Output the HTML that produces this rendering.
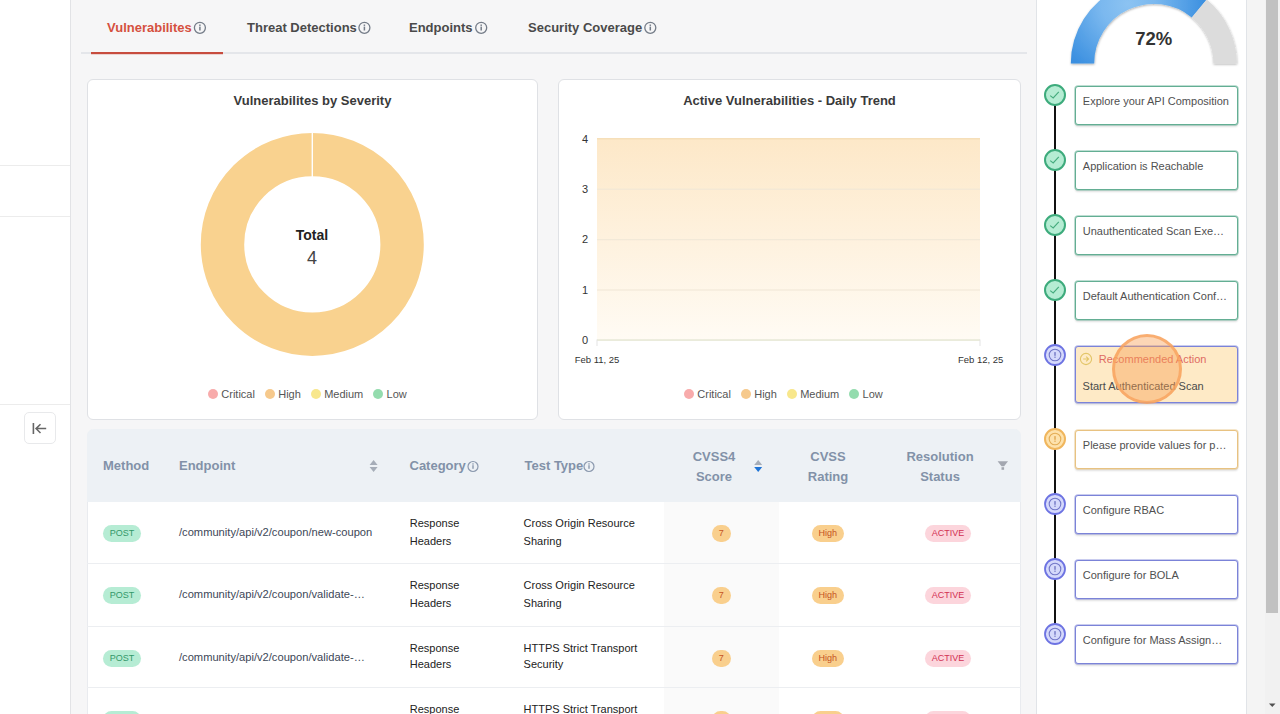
<!DOCTYPE html>
<html><head><meta charset="utf-8">
<style>
*{box-sizing:border-box;margin:0;padding:0}
html,body{width:1280px;height:714px;overflow:hidden;background:#f6f6f7;font-family:"Liberation Sans",sans-serif;}
.abs{position:absolute}
#sidebar{position:absolute;left:0;top:0;width:71px;height:714px;background:#fff;border-right:1px solid #e2e3e6}
.hl{position:absolute;left:0;width:70px;height:1px;background:#ececec}
#collapse{position:absolute;left:24px;top:412px;width:32px;height:32px;border:1px solid #e8e9eb;border-radius:5px;background:#fff}
.tab{position:absolute;top:19.6px;font-size:13px;font-weight:bold;color:#4a4a4a;white-space:nowrap;line-height:16px}
.info{position:absolute;width:12px;height:12px}
.card{position:absolute;top:79px;height:340.5px;background:#fff;border:1px solid #dfe1e5;border-radius:6px}
.ctitle{position:absolute;left:0;right:0;top:93px;text-align:center;font-size:13px;font-weight:bold;color:#3a3a3a;line-height:16px}
.legend{position:absolute;top:387px;height:14px;font-size:11px;color:#555;white-space:nowrap;line-height:14px}
.legend span.it{display:inline-block;margin-right:10px}
.legend i{display:inline-block;width:10px;height:10px;border-radius:50%;margin-right:3.3px;vertical-align:-1px}
.th{position:absolute;top:458px;font-size:13px;font-weight:bold;color:#8291a8;line-height:16px;white-space:nowrap}
.th2{position:absolute;top:447px;font-size:13px;font-weight:bold;color:#8291a8;line-height:20.3px;text-align:center;white-space:nowrap}
.badge{position:absolute;height:17px;border-radius:9px;font-size:9px;line-height:17px;text-align:center;white-space:nowrap}
.td{position:absolute;font-size:11.15px;line-height:14px;white-space:nowrap}
.td2{position:absolute;font-size:11px;line-height:17.5px;color:#222;white-space:nowrap}
.tl{position:absolute;left:1074.5px;width:163.5px;border:1px solid #6cba9b;border-radius:3px;background:#fff;font-size:11px;line-height:14px;color:#505050;padding:7.5px 0 0 7.3px;white-space:nowrap;box-shadow:0 0 0 0.7px var(--bc),0 2px 2px rgba(0,0,0,0.12)}
</style></head>
<body>
<div id="sidebar">
  <div class="hl" style="top:165px"></div>
  <div class="hl" style="top:216px"></div>
  <div class="hl" style="top:404px"></div>
  <div id="collapse">
    <svg width="30" height="30" viewBox="0 0 30 30" style="position:absolute;left:0;top:0">
      <path d="M8.4 10V21" stroke="#666" stroke-width="1.6" fill="none"/>
      <path d="M11 15.6H21.2M15.5 11.2L11 15.6L15.5 20" stroke="#666" stroke-width="1.5" fill="none"/>
    </svg>
  </div>
</div>

<!-- tabs -->
<div class="tab" style="left:107px;color:#d5503f">Vulnerabilites</div>
<div class="tab" style="left:247px">Threat Detections</div>
<div class="tab" style="left:409px">Endpoints</div>
<div class="tab" style="left:528px">Security Coverage</div>
<svg class="abs" style="left:0;top:0" width="1036" height="60">
  <g fill="none" stroke="#747c88" stroke-width="1.3">
    <circle cx="199.9" cy="27.8" r="5.5"/>
    <circle cx="364.4" cy="27.8" r="5.5"/>
    <circle cx="481.2" cy="27.8" r="5.5"/>
    <circle cx="650.3" cy="27.8" r="5.5"/>
  </g>
  <g fill="#747c88">
    <rect x="199.15" y="26.6" width="1.5" height="3.9"/><rect x="199.15" y="24.5" width="1.5" height="1.4"/>
    <rect x="363.65" y="26.6" width="1.5" height="3.9"/><rect x="363.65" y="24.5" width="1.5" height="1.4"/>
    <rect x="480.45" y="26.6" width="1.5" height="3.9"/><rect x="480.45" y="24.5" width="1.5" height="1.4"/>
    <rect x="649.55" y="26.6" width="1.5" height="3.9"/><rect x="649.55" y="24.5" width="1.5" height="1.4"/>
  </g>
  <rect x="81" y="52" width="946" height="2" fill="#e4e6ea"/>
  <rect x="91" y="52" width="132" height="2.2" fill="#c74c3e"/>
</svg>

<!-- left card -->
<div class="card" style="left:87px;width:451px"></div>
<div class="ctitle" style="left:87px;width:451px;right:auto">Vulnerabilites by Severity</div>
<svg class="abs" style="left:190px;top:120px" width="245" height="250" viewBox="190 120 245 250">
  <circle cx="312.3" cy="244.4" r="89.8" fill="none" stroke="#f9d28f" stroke-width="43.4"/>
  <rect x="311.6" y="131" width="1.4" height="47" fill="#fff"/>
</svg>
<div class="abs" style="left:262px;width:100px;top:227px;text-align:center;font-size:14px;font-weight:bold;color:#222;line-height:16px">Total</div>
<div class="abs" style="left:262px;width:100px;top:248px;text-align:center;font-size:18px;color:#444;line-height:20px">4</div>
<div class="legend" style="left:208px">
  <span class="it"><i style="background:#f8abab"></i>Critical</span><span class="it"><i style="background:#f6c98c"></i>High</span><span class="it"><i style="background:#f8e78c"></i>Medium</span><span class="it"><i style="background:#94dcae"></i>Low</span>
</div>

<!-- right card -->
<div class="card" style="left:558px;width:463px"></div>
<div class="ctitle" style="left:558px;width:463px;right:auto">Active Vulnerabilities - Daily Trend</div>
<svg class="abs" style="left:558px;top:120px" width="463" height="260" viewBox="558 120 463 260">
  <defs>
    <linearGradient id="ag" x1="0" y1="0" x2="0" y2="1">
      <stop offset="0" stop-color="#fde8c8"/>
      <stop offset="1" stop-color="#fffbf4"/>
    </linearGradient>
  </defs>
  <rect x="597" y="138.5" width="383" height="201" fill="url(#ag)"/>
  <g fill="#efe6d6">
    <rect x="597" y="188.7" width="383" height="1"/>
    <rect x="597" y="239.2" width="383" height="1"/>
    <rect x="597" y="289.5" width="383" height="1"/>
  </g>
  <rect x="597" y="138" width="383" height="1.5" fill="#f6dfb9"/>
  <rect x="597" y="339.3" width="383" height="1.5" fill="#e5e6d3"/>
  <rect x="596.5" y="339.5" width="1" height="6.5" fill="#e3e3e3"/>
  <rect x="979.5" y="339.5" width="1" height="6.5" fill="#e3e3e3"/>
  <g font-family="Liberation Sans" font-size="11" fill="#333" text-anchor="end">
    <text x="588" y="142.6">4</text>
    <text x="588" y="193">3</text>
    <text x="588" y="243.3">2</text>
    <text x="588" y="293.7">1</text>
    <text x="588" y="344">0</text>
  </g>
  <g font-family="Liberation Sans" font-size="9.5" fill="#333" text-anchor="middle">
    <text x="597" y="363">Feb 11, 25</text>
    <text x="980.7" y="363">Feb 12, 25</text>
  </g>
</svg>
<div class="legend" style="left:684px">
  <span class="it"><i style="background:#f8abab"></i>Critical</span><span class="it"><i style="background:#f6c98c"></i>High</span><span class="it"><i style="background:#f8e78c"></i>Medium</span><span class="it"><i style="background:#94dcae"></i>Low</span>
</div>

<!-- TABLE -->
<div class="abs" style="left:87px;top:429px;width:934px;height:300px;background:#fff;border-radius:7px 7px 0 0;overflow:hidden;box-shadow:inset 1px 0 0 #e9ebef,inset -1px 0 0 #e9ebef">
  <div class="abs" style="left:0;top:0;width:934px;height:73px;background:#edf1f5"></div>
  <div class="abs" style="left:577px;top:73px;width:115px;height:260px;background:#fafafa"></div>
  <div class="abs" style="left:0;top:134px;width:934px;height:1px;background:#eceef1"></div>
  <div class="abs" style="left:0;top:197px;width:934px;height:1px;background:#eceef1"></div>
  <div class="abs" style="left:0;top:258px;width:934px;height:1px;background:#eceef1"></div>
</div>
<div class="th" style="left:103px">Method</div>
<div class="th" style="left:179px">Endpoint</div>
<div class="th" style="left:409.5px">Category</div>
<div class="th" style="left:524.5px">Test Type</div>
<div class="th2" style="left:664px;width:100px">CVSS4<br>Score</div>
<div class="th2" style="left:778px;width:100px">CVSS<br>Rating</div>
<div class="th2" style="left:890px;width:100px">Resolution<br>Status</div>
<svg class="abs" style="left:0;top:440px" width="1030" height="50" viewBox="0 440 1030 50">
  <g fill="none" stroke="#8b99ae" stroke-width="1.2">
    <circle cx="473" cy="466.5" r="5"/>
    <circle cx="589" cy="466.5" r="5"/>
  </g>
  <g fill="#8b99ae">
    <rect x="472.3" y="465.2" width="1.4" height="3.6"/><rect x="472.3" y="463.3" width="1.4" height="1.3"/>
    <rect x="588.3" y="465.2" width="1.4" height="3.6"/><rect x="588.3" y="463.3" width="1.4" height="1.3"/>
  </g>
  <path d="M369.6 465L373.6 460L377.6 465Z M369.6 467L373.6 472L377.6 467Z" fill="#a6adb8"/>
  <path d="M754.2 465L758.2 460L762.2 465Z" fill="#a6adb8"/>
  <path d="M754.2 467L758.2 472L762.2 467Z" fill="#1f74d6"/>
  <path d="M997.6 461.2H1008L1004.1 466.2H1001.5Z" fill="#a3a7b0"/><rect x="1001.5" y="467.2" width="2.6" height="2.6" fill="#a3a7b0"/>
</svg>
<div class="badge" style="left:103px;top:524.5px;width:38px;background:#b6ecd4;color:#33986a">POST</div>
<div class="td" style="left:179px;top:525px;color:#3d4757">/community/api/v2/coupon/new-coupon</div>
<div class="td2" style="left:409.8px;top:515.0px">Response<br>Headers</div>
<div class="td2" style="left:523.6px;top:515.0px">Cross Origin Resource<br>Sharing</div>
<div class="badge" style="left:712px;top:524.5px;width:18.5px;background:#f9cf8d;color:#c5521f">7</div>
<div class="badge" style="left:811.5px;top:524.5px;width:32.5px;background:#f9cf8d;color:#c5521f">High</div>
<div class="badge" style="left:925.2px;top:524.5px;width:45.6px;background:#fcd5dc;color:#d23152">ACTIVE</div>
<div class="badge" style="left:103px;top:586.5px;width:38px;background:#b6ecd4;color:#33986a">POST</div>
<div class="td" style="left:179px;top:587px;color:#3d4757">/community/api/v2/coupon/validate-…</div>
<div class="td2" style="left:409.8px;top:577.0px">Response<br>Headers</div>
<div class="td2" style="left:523.6px;top:577.0px">Cross Origin Resource<br>Sharing</div>
<div class="badge" style="left:712px;top:586.5px;width:18.5px;background:#f9cf8d;color:#c5521f">7</div>
<div class="badge" style="left:811.5px;top:586.5px;width:32.5px;background:#f9cf8d;color:#c5521f">High</div>
<div class="badge" style="left:925.2px;top:586.5px;width:45.6px;background:#fcd5dc;color:#d23152">ACTIVE</div>
<div class="badge" style="left:103px;top:649.5px;width:38px;background:#b6ecd4;color:#33986a">POST</div>
<div class="td" style="left:179px;top:650px;color:#3d4757">/community/api/v2/coupon/validate-…</div>
<div class="td2" style="left:409.8px;top:639.7px;line-height:16.7px">Response<br>Headers</div>
<div class="td2" style="left:523.6px;top:639.7px;line-height:16.7px">HTTPS Strict Transport<br>Security</div>
<div class="badge" style="left:712px;top:649.5px;width:18.5px;background:#f9cf8d;color:#c5521f">7</div>
<div class="badge" style="left:811.5px;top:649.5px;width:32.5px;background:#f9cf8d;color:#c5521f">High</div>
<div class="badge" style="left:925.2px;top:649.5px;width:45.6px;background:#fcd5dc;color:#d23152">ACTIVE</div>
<div class="badge" style="left:103px;top:710.5px;width:38px;background:#b6ecd4;color:#33986a">POST</div>
<div class="td" style="left:179px;top:712px;color:#3d4757"></div>
<div class="td2" style="left:409.8px;top:701px">Response<br>Headers</div>
<div class="td2" style="left:523.6px;top:701px">HTTPS Strict Transport<br>Security</div>
<div class="badge" style="left:712px;top:710.5px;width:18.5px;background:#f9cf8d;color:#c5521f">7</div>
<div class="badge" style="left:811.5px;top:710.5px;width:32.5px;background:#f9cf8d;color:#c5521f">High</div>
<div class="badge" style="left:925.2px;top:710.5px;width:45.6px;background:#fcd5dc;color:#d23152">ACTIVE</div>


<!-- RIGHT PANEL -->
<div class="abs" style="left:1036px;top:0;width:211px;height:714px;background:#fff;border-left:1px solid #e1e4e8;border-right:1px solid #e1e4e8"></div>
<div class="abs" style="left:1247px;top:0;width:18px;height:714px;background:#f4f4f4"></div>
<div class="abs" style="left:1265px;top:0;width:15px;height:714px;background:#f1f1f1"></div>
<div class="abs" style="left:1266px;top:0;width:12px;height:613px;background:#c1c1c1"></div>
<svg class="abs" style="left:1265px;top:698px" width="15" height="16"><path d="M4 5.5H10.5L7.25 9Z" fill="#505050"/></svg>
<svg class="abs" style="left:1036px;top:0" width="210" height="80" viewBox="1036 0 210 80">
  <defs>
    <radialGradient id="bg1" cx="1153.8" cy="63.5" r="83" gradientUnits="userSpaceOnUse">
      <stop offset="0.7" stop-color="#fff" stop-opacity="0"/>
      <stop offset="0.87" stop-color="#fff" stop-opacity="0.2"/>
      <stop offset="1" stop-color="#fff" stop-opacity="0.02"/>
    </radialGradient>
    <radialGradient id="bg2" cx="1128" cy="4" r="78" gradientUnits="userSpaceOnUse">
      <stop offset="0" stop-color="#8cc3f2"/>
      <stop offset="0.35" stop-color="#7ab8ef"/>
      <stop offset="1" stop-color="#3a8fe0"/>
    </radialGradient>
    <filter id="ds" x="-10%" y="-10%" width="120%" height="130%"><feDropShadow dx="0.3" dy="1" stdDeviation="0.9" flood-color="#000" flood-opacity="0.32"/></filter>
  </defs>
  <g filter="url(#ds)">
  <path d="M1070.80 63.50 A83 83 0 0 1 1206.71 -0.45 L1191.79 17.58 A59.6 59.6 0 0 0 1094.20 63.50 Z" fill="url(#bg2)"/>
  <path d="M1206.71 -0.45 A83 83 0 0 1 1236.80 63.50 L1213.40 63.50 A59.6 59.6 0 0 0 1191.79 17.58 Z" fill="#dcdcdc"/>
  </g>
  
  <text x="1153.8" y="44.5" text-anchor="middle" font-family="Liberation Sans" font-weight="bold" font-size="18.5" fill="#333">72%</text>
</svg>
<div class="abs" style="left:1054px;top:100px;width:2px;height:530px;background:#111"></div>
<svg class="abs" style="left:1043px;top:83px" width="24" height="24"><circle cx="12" cy="12" r="10" fill="#b5ecd3" stroke="#3dab7c" stroke-width="2"/><path d="M7.2 12.6L10.2 14.9L15.8 8.9" fill="none" stroke="#45ab7d" stroke-width="1.15"/></svg>
<div class="tl" style="top:85.5px;height:39px;border-color:#63ae93;--bc:rgba(99,174,147,0.55)">Explore your API Composition</div>
<svg class="abs" style="left:1043px;top:148px" width="24" height="24"><circle cx="12" cy="12" r="10" fill="#b5ecd3" stroke="#3dab7c" stroke-width="2"/><path d="M7.2 12.6L10.2 14.9L15.8 8.9" fill="none" stroke="#45ab7d" stroke-width="1.15"/></svg>
<div class="tl" style="top:150.5px;height:39px;border-color:#63ae93;--bc:rgba(99,174,147,0.55)">Application is Reachable</div>
<svg class="abs" style="left:1043px;top:213px" width="24" height="24"><circle cx="12" cy="12" r="10" fill="#b5ecd3" stroke="#3dab7c" stroke-width="2"/><path d="M7.2 12.6L10.2 14.9L15.8 8.9" fill="none" stroke="#45ab7d" stroke-width="1.15"/></svg>
<div class="tl" style="top:215.5px;height:39px;border-color:#63ae93;--bc:rgba(99,174,147,0.55)">Unauthenticated Scan Exe…</div>
<svg class="abs" style="left:1043px;top:278px" width="24" height="24"><circle cx="12" cy="12" r="10" fill="#b5ecd3" stroke="#3dab7c" stroke-width="2"/><path d="M7.2 12.6L10.2 14.9L15.8 8.9" fill="none" stroke="#45ab7d" stroke-width="1.15"/></svg>
<div class="tl" style="top:280.5px;height:39px;border-color:#63ae93;--bc:rgba(99,174,147,0.55)">Default Authentication Conf…</div>
<svg class="abs" style="left:1043px;top:343px" width="24" height="24"><circle cx="12" cy="12" r="10" fill="#d5d9fb" stroke="#6d73e2" stroke-width="1.8"/><circle cx="12" cy="12" r="5.8" fill="none" stroke="#7277c8" stroke-width="1.1"/><rect x="11.35" y="9.1" width="1.3" height="3.7" fill="#6a6fbf"/><rect x="11.35" y="13.6" width="1.3" height="1.2" fill="#6a6fbf"/></svg>
<div class="tl" style="top:346px;height:57px;border-color:#7b83d8;--bc:rgba(123,131,216,0.55);background:#feeac6;padding:0"></div>
<svg class="abs" style="left:1079px;top:352px" width="14" height="14"><circle cx="7" cy="7" r="5.6" fill="none" stroke="#e3c568" stroke-width="1.1"/><path d="M4.2 7H9.6M7.2 4.6L9.6 7L7.2 9.4" fill="none" stroke="#e3c568" stroke-width="1.1"/></svg>
<div class="abs" style="left:1098.8px;top:351.7px;font-size:11px;line-height:14px;color:#de6a62;white-space:nowrap">Recommended Action</div>
<div class="abs" style="left:1082.6px;top:378.6px;font-size:11px;line-height:14px;color:#4a4a4a;white-space:nowrap">Start Authenticated Scan</div>
<div class="abs" style="left:1112px;top:333.8px;width:70px;height:70px;border-radius:50%;background:rgba(247,158,80,0.42);border:3px solid rgba(247,162,95,0.8)"></div>
<svg class="abs" style="left:1043px;top:427px" width="24" height="24"><circle cx="12" cy="12" r="10" fill="#fde2ad" stroke="#f0b65d" stroke-width="2"/><circle cx="12" cy="12" r="5.8" fill="none" stroke="#e4ad55" stroke-width="1.1"/><rect x="11.35" y="9.1" width="1.3" height="3.7" fill="#dea24a"/><rect x="11.35" y="13.6" width="1.3" height="1.2" fill="#dea24a"/></svg>
<div class="tl" style="top:429.5px;height:39px;border-color:#e8c281;--bc:rgba(232,194,129,0.55)">Please provide values for p…</div>
<svg class="abs" style="left:1043px;top:492px" width="24" height="24"><circle cx="12" cy="12" r="10" fill="#d5d9fb" stroke="#6d73e2" stroke-width="1.8"/><circle cx="12" cy="12" r="5.8" fill="none" stroke="#7277c8" stroke-width="1.1"/><rect x="11.35" y="9.1" width="1.3" height="3.7" fill="#6a6fbf"/><rect x="11.35" y="13.6" width="1.3" height="1.2" fill="#6a6fbf"/></svg>
<div class="tl" style="top:494.5px;height:39px;border-color:#7b83d8;--bc:rgba(123,131,216,0.55)">Configure RBAC</div>
<svg class="abs" style="left:1043px;top:557px" width="24" height="24"><circle cx="12" cy="12" r="10" fill="#d5d9fb" stroke="#6d73e2" stroke-width="1.8"/><circle cx="12" cy="12" r="5.8" fill="none" stroke="#7277c8" stroke-width="1.1"/><rect x="11.35" y="9.1" width="1.3" height="3.7" fill="#6a6fbf"/><rect x="11.35" y="13.6" width="1.3" height="1.2" fill="#6a6fbf"/></svg>
<div class="tl" style="top:559.5px;height:39px;border-color:#7b83d8;--bc:rgba(123,131,216,0.55)">Configure for BOLA</div>
<svg class="abs" style="left:1043px;top:622px" width="24" height="24"><circle cx="12" cy="12" r="10" fill="#d5d9fb" stroke="#6d73e2" stroke-width="1.8"/><circle cx="12" cy="12" r="5.8" fill="none" stroke="#7277c8" stroke-width="1.1"/><rect x="11.35" y="9.1" width="1.3" height="3.7" fill="#6a6fbf"/><rect x="11.35" y="13.6" width="1.3" height="1.2" fill="#6a6fbf"/></svg>
<div class="tl" style="top:624.5px;height:39px;border-color:#7b83d8;--bc:rgba(123,131,216,0.55)">Configure for Mass Assign…</div>


</body></html>
